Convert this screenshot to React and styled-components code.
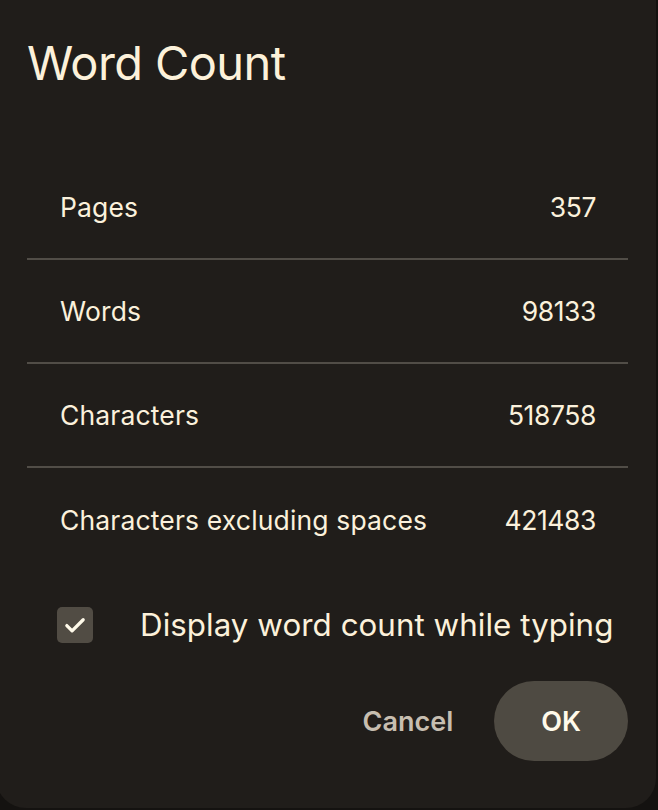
import React from "react";
import styled, { createGlobalStyle } from "styled-components";

const GlobalStyle = createGlobalStyle`
  html, body {
    margin: 0;
    padding: 0;
    background: #141210;
  }
  body {
    font-family: Inter, "Noto Sans", sans-serif;
    overflow: hidden;
  }
`;

const Dialog = styled.div`
  box-sizing: border-box;
  width: 660px;
  height: 808px;
  margin-left: -4px;
  padding: 34px 28px 0 31px;
  background: #201d1a;
  border-radius: 0 0 30px 30px;
  display: flex;
  flex-direction: column;
`;

const Title = styled.h1`
  margin: 0;
  font-size: 47px;
  line-height: 58px;
  font-weight: 400;
  color: #fcf1da;
  letter-spacing: -0.6px;
`;

const StatList = styled.div`
  margin: 64px 0 0 0;
  width: 601px;
  display: flex;
  flex-direction: column;
`;

const StatRow = styled.div`
  box-sizing: border-box;
  height: 104px;
  padding: 0 32px 0 33px;
  display: flex;
  align-items: center;
  justify-content: space-between;
  border-bottom: ${({ last }) => (last ? "none" : "2px solid #514d47")};
  font-size: 26.5px;
  letter-spacing: 0.15px;
  color: #fbf1dc;
`;

const Value = styled.span`
  letter-spacing: -0.4px;
`;

const CheckRow = styled.label`
  display: flex;
  align-items: center;
  gap: 47px;
  margin: 35px 0 0 30px;
  height: 36px;
  font-size: 31.3px;
  color: #fcf1da;
  letter-spacing: 0.05px;
`;

const CheckBox = styled.span`
  width: 36px;
  height: 36px;
  border-radius: 5px;
  background: #514c44;
  display: flex;
  align-items: center;
  justify-content: center;
`;

const Actions = styled.div`
  display: flex;
  justify-content: flex-end;
  align-items: center;
  gap: 21px;
  margin: 38px 0 0 0;
`;

const Button = styled.button`
  border: none;
  font-family: Inter, "Noto Sans", sans-serif;
  font-size: 27px;
  font-weight: 600;
  height: 80px;
  border-radius: 40px;
  padding: 0 ${({ primary }) => (primary ? "47px" : "20px")};
  background: ${({ primary }) => (primary ? "#4e4a42" : "transparent")};
  color: ${({ primary }) => (primary ? "#fffaea" : "#c7beb0")};
  cursor: pointer;
`;

const stats = [
  ["Pages", "357"],
  ["Words", "98133"],
  ["Characters", "518758"],
  ["Characters excluding spaces", "421483"],
];

const App = () => {
  return (
    <>
      <GlobalStyle />
      <Dialog>
        <Title>Word Count</Title>
        <StatList>
          {stats.map(([name, value], i) => (
            <StatRow key={name} last={i === stats.length - 1}>
              <span>{name}</span>
              <Value>{value}</Value>
            </StatRow>
          ))}
        </StatList>
        <CheckRow>
          <CheckBox>
            <svg width="28" height="28" viewBox="0 0 24 24" fill="none">
              <path
                d="M5 12.5l4.5 4.5L19 7.5"
                stroke="#fffaea"
                strokeWidth="2.8"
                strokeLinecap="round"
                strokeLinejoin="round"
              />
            </svg>
          </CheckBox>
          Display word count while typing
        </CheckRow>
        <Actions>
          <Button>Cancel</Button>
          <Button primary>OK</Button>
        </Actions>
      </Dialog>
    </>
  );
};

export default App;
